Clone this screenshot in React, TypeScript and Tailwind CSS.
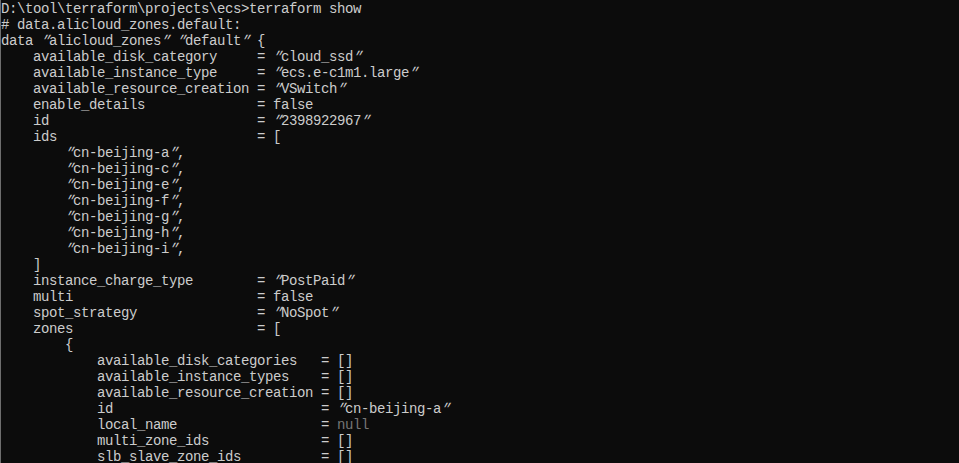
import React from "react";

const LINES: string[] = [
  'D:\\tool\\terraform\\projects\\ecs>terraform show',
  '# data.alicloud_zones.default:',
  'data "alicloud_zones" "default" {',
  '    available_disk_category     = "cloud_ssd"',
  '    available_instance_type     = "ecs.e-c1m1.large"',
  '    available_resource_creation = "VSwitch"',
  '    enable_details              = false',
  '    id                          = "2398922967"',
  '    ids                         = [',
  '        "cn-beijing-a",',
  '        "cn-beijing-c",',
  '        "cn-beijing-e",',
  '        "cn-beijing-f",',
  '        "cn-beijing-g",',
  '        "cn-beijing-h",',
  '        "cn-beijing-i",',
  '    ]',
  '    instance_charge_type        = "PostPaid"',
  '    multi                       = false',
  '    spot_strategy               = "NoSpot"',
  '    zones                       = [',
  '        {',
  '            available_disk_categories   = []',
  '            available_instance_types    = []',
  '            available_resource_creation = []',
  '            id                          = "cn-beijing-a"',
  '            local_name                  = null',
  '            multi_zone_ids              = []',
  '            slb_slave_zone_ids          = []',
];

function renderSegment(text: string, key: string) {
  const parts = text.split('"');
  const out: React.ReactNode[] = [];
  parts.forEach((p, i) => {
    if (i > 0) {
      out.push(
        <span key={key + "q" + i} className="inline-block w-[8px] -skew-x-[30deg] text-center tracking-normal">
          "
        </span>
      );
    }
    if (p) out.push(<span key={key + "t" + i}>{p}</span>);
  });
  return out;
}

function Line({ text }: { text: string }) {
  if (text.endsWith("= null")) {
    const head = text.slice(0, text.length - 4);
    return (
      <div className="h-[16px] leading-[16px] whitespace-pre">
        {head}
        <span className="text-[#767676]">null</span>
      </div>
    );
  }
  return <div className="h-[16px] leading-[16px] whitespace-pre">{renderSegment(text, "s")}</div>;
}

export default function App() {
  return (
    <div className="w-[959px] h-[463px] overflow-hidden bg-[#0c0c0c] border-l border-[#6e6e6e] pt-[1px] text-[#cccccc] text-[14px] tracking-[-0.4px] font-['Liberation_Mono',monospace] flex flex-col">
      {LINES.map((l, i) => (
        <Line key={i} text={l} />
      ))}
    </div>
  );
}
